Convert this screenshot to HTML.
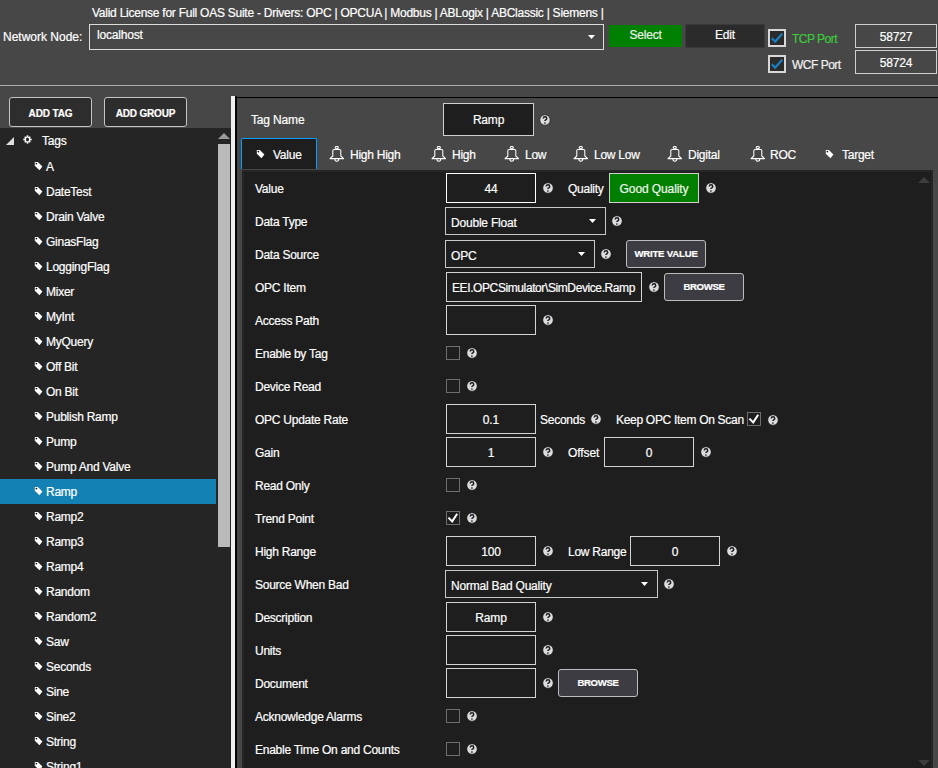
<!DOCTYPE html>
<html><head><meta charset="utf-8"><style>
html,body{margin:0;padding:0;width:938px;height:768px;overflow:hidden;background:#474747;}
.a{position:absolute;}
.t{font-family:"Liberation Sans", sans-serif;white-space:nowrap;-webkit-text-stroke:0.2px currentColor;}
svg{display:block;}
</style></head><body>
<div class="a" style="left:0px;top:0px;width:938px;height:768px;background:#474747;box-sizing:border-box;"></div>
<div class="a t" style="left:92px;top:7px;font-size:12px;line-height:12px;color:#ffffff;letter-spacing:-0.25px;">Valid License for Full OAS Suite - Drivers: OPC | OPCUA | Modbus | ABLogix | ABClassic | Siemens |</div>
<div class="a t" style="left:3px;top:31px;font-size:12px;line-height:12px;color:#ffffff;letter-spacing:0px;">Network Node:</div>
<div class="a" style="left:89px;top:24px;width:515px;height:26px;border:1px solid #dcdcdc;box-sizing:border-box;"></div>
<div class="a t" style="left:97px;top:29px;font-size:12px;line-height:12px;color:#ffffff;letter-spacing:-0.2px;">localhost</div>
<svg class="a" style="left:588px;top:35px" width="7" height="4" viewBox="0 0 7 4"><path d="M0 0 L7 0 L3.5 4 Z" fill="#fff"/></svg>
<div class="a" style="left:609px;top:25px;width:73px;height:22px;background:#008000;box-sizing:border-box;"></div>
<div class="a t" style="left:609px;width:73px;text-align:center;top:29px;font-size:12px;line-height:12px;color:#e8f0e8;letter-spacing:-0.2px;">Select</div>
<div class="a" style="left:685px;top:24px;width:80px;height:24px;background:#2b2b2b;border:1px solid #3a3a3a;box-sizing:border-box;"></div>
<div class="a t" style="left:685px;width:80px;text-align:center;top:29px;font-size:12px;line-height:12px;color:#ffffff;letter-spacing:-0.2px;">Edit</div>
<div class="a" style="left:768px;top:29px;width:18px;height:18px;background:#2b2b2b;border:2px solid #d8d8d8;box-sizing:border-box;"></div>
<svg class="a" style="left:768px;top:29px" width="18" height="18" viewBox="0 0 18 18"><path d="M3.8 9.2 L7.2 12.6 L14.2 4.8" fill="none" stroke="#1a7fc0" stroke-width="2.2"/></svg>
<div class="a t" style="left:792px;top:33px;font-size:12px;line-height:12px;color:#3ccb3c;letter-spacing:-0.5px;">TCP Port</div>
<div class="a" style="left:768px;top:55px;width:18px;height:18px;background:#2b2b2b;border:2px solid #d8d8d8;box-sizing:border-box;"></div>
<svg class="a" style="left:768px;top:55px" width="18" height="18" viewBox="0 0 18 18"><path d="M3.8 9.2 L7.2 12.6 L14.2 4.8" fill="none" stroke="#1a7fc0" stroke-width="2.2"/></svg>
<div class="a t" style="left:792px;top:59px;font-size:12px;line-height:12px;color:#f2f2f2;letter-spacing:-0.5px;">WCF Port</div>
<div class="a" style="left:855px;top:24px;width:82px;height:24px;border:1px solid #d0d0d0;box-sizing:border-box;"></div>
<div class="a t" style="left:855px;width:82px;text-align:center;top:31px;font-size:12px;line-height:12px;color:#ffffff;letter-spacing:-0.2px;">58727</div>
<div class="a" style="left:855px;top:50px;width:82px;height:24px;border:1px solid #d0d0d0;box-sizing:border-box;"></div>
<div class="a t" style="left:855px;width:82px;text-align:center;top:57px;font-size:12px;line-height:12px;color:#ffffff;letter-spacing:-0.2px;">58724</div>
<div class="a" style="left:0px;top:85px;width:938px;height:1px;background:#ababab;box-sizing:border-box;"></div>
<div class="a" style="left:9px;top:97px;width:83px;height:30px;background:#2d2d2d;border:1px solid #c4c4c4;border-radius:3px;box-sizing:border-box;"></div>
<div class="a t" style="left:9px;width:83px;text-align:center;top:109px;font-size:10px;line-height:10px;color:#ffffff;font-weight:700;letter-spacing:-0.15px;">ADD TAG</div>
<div class="a" style="left:104px;top:97px;width:83px;height:30px;background:#2d2d2d;border:1px solid #c4c4c4;border-radius:3px;box-sizing:border-box;"></div>
<div class="a t" style="left:104px;width:83px;text-align:center;top:109px;font-size:10px;line-height:10px;color:#ffffff;font-weight:700;letter-spacing:-0.2px;">ADD GROUP</div>
<div class="a" style="left:0px;top:128px;width:231px;height:640px;background:#252525;box-sizing:border-box;"></div>
<svg class="a" style="left:6px;top:137px" width="9" height="8" viewBox="0 0 9 8"><path d="M0 8 L8 0 L8 8 Z" fill="#e0e0e0"/></svg>
<svg class="a" style="left:23px;top:135px" width="9" height="9" viewBox="0 0 9 9"><g fill="#fff"><circle cx="4.5" cy="4.5" r="2.9"/><rect x="3.7" y="0.3" width="1.6" height="8.4"/><rect x="0.3" y="3.7" width="8.4" height="1.6"/><rect x="3.7" y="0.6" width="1.6" height="7.8" transform="rotate(45 4.5 4.5)"/><rect x="0.6" y="3.7" width="7.8" height="1.6" transform="rotate(45 4.5 4.5)"/></g><ellipse cx="4.5" cy="4.5" rx="1.5" ry="1.9" fill="#252525"/></svg>
<div class="a t" style="left:42px;top:135px;font-size:12px;line-height:12px;color:#ffffff;letter-spacing:-0.2px;">Tags</div>
<svg class="a" style="left:34px;top:162px" width="10" height="10" viewBox="0 0 10 10"><path d="M0.8 0 L3.9 0 L8.4 4.6 L5.5 8.3 L0.8 3.7 Z" fill="#fff"/><circle cx="2.4" cy="1.6" r="0.85" fill="#111"/></svg>
<div class="a t" style="left:46px;top:161px;font-size:12px;line-height:12px;color:#ffffff;letter-spacing:-0.25px;">A</div>
<svg class="a" style="left:34px;top:187px" width="10" height="10" viewBox="0 0 10 10"><path d="M0.8 0 L3.9 0 L8.4 4.6 L5.5 8.3 L0.8 3.7 Z" fill="#fff"/><circle cx="2.4" cy="1.6" r="0.85" fill="#111"/></svg>
<div class="a t" style="left:46px;top:186px;font-size:12px;line-height:12px;color:#ffffff;letter-spacing:-0.25px;">DateTest</div>
<svg class="a" style="left:34px;top:212px" width="10" height="10" viewBox="0 0 10 10"><path d="M0.8 0 L3.9 0 L8.4 4.6 L5.5 8.3 L0.8 3.7 Z" fill="#fff"/><circle cx="2.4" cy="1.6" r="0.85" fill="#111"/></svg>
<div class="a t" style="left:46px;top:211px;font-size:12px;line-height:12px;color:#ffffff;letter-spacing:-0.25px;">Drain Valve</div>
<svg class="a" style="left:34px;top:237px" width="10" height="10" viewBox="0 0 10 10"><path d="M0.8 0 L3.9 0 L8.4 4.6 L5.5 8.3 L0.8 3.7 Z" fill="#fff"/><circle cx="2.4" cy="1.6" r="0.85" fill="#111"/></svg>
<div class="a t" style="left:46px;top:236px;font-size:12px;line-height:12px;color:#ffffff;letter-spacing:-0.25px;">GinasFlag</div>
<svg class="a" style="left:34px;top:262px" width="10" height="10" viewBox="0 0 10 10"><path d="M0.8 0 L3.9 0 L8.4 4.6 L5.5 8.3 L0.8 3.7 Z" fill="#fff"/><circle cx="2.4" cy="1.6" r="0.85" fill="#111"/></svg>
<div class="a t" style="left:46px;top:261px;font-size:12px;line-height:12px;color:#ffffff;letter-spacing:-0.25px;">LoggingFlag</div>
<svg class="a" style="left:34px;top:287px" width="10" height="10" viewBox="0 0 10 10"><path d="M0.8 0 L3.9 0 L8.4 4.6 L5.5 8.3 L0.8 3.7 Z" fill="#fff"/><circle cx="2.4" cy="1.6" r="0.85" fill="#111"/></svg>
<div class="a t" style="left:46px;top:286px;font-size:12px;line-height:12px;color:#ffffff;letter-spacing:-0.25px;">Mixer</div>
<svg class="a" style="left:34px;top:312px" width="10" height="10" viewBox="0 0 10 10"><path d="M0.8 0 L3.9 0 L8.4 4.6 L5.5 8.3 L0.8 3.7 Z" fill="#fff"/><circle cx="2.4" cy="1.6" r="0.85" fill="#111"/></svg>
<div class="a t" style="left:46px;top:311px;font-size:12px;line-height:12px;color:#ffffff;letter-spacing:-0.25px;">MyInt</div>
<svg class="a" style="left:34px;top:337px" width="10" height="10" viewBox="0 0 10 10"><path d="M0.8 0 L3.9 0 L8.4 4.6 L5.5 8.3 L0.8 3.7 Z" fill="#fff"/><circle cx="2.4" cy="1.6" r="0.85" fill="#111"/></svg>
<div class="a t" style="left:46px;top:336px;font-size:12px;line-height:12px;color:#ffffff;letter-spacing:-0.25px;">MyQuery</div>
<svg class="a" style="left:34px;top:362px" width="10" height="10" viewBox="0 0 10 10"><path d="M0.8 0 L3.9 0 L8.4 4.6 L5.5 8.3 L0.8 3.7 Z" fill="#fff"/><circle cx="2.4" cy="1.6" r="0.85" fill="#111"/></svg>
<div class="a t" style="left:46px;top:361px;font-size:12px;line-height:12px;color:#ffffff;letter-spacing:-0.25px;">Off Bit</div>
<svg class="a" style="left:34px;top:387px" width="10" height="10" viewBox="0 0 10 10"><path d="M0.8 0 L3.9 0 L8.4 4.6 L5.5 8.3 L0.8 3.7 Z" fill="#fff"/><circle cx="2.4" cy="1.6" r="0.85" fill="#111"/></svg>
<div class="a t" style="left:46px;top:386px;font-size:12px;line-height:12px;color:#ffffff;letter-spacing:-0.25px;">On Bit</div>
<svg class="a" style="left:34px;top:412px" width="10" height="10" viewBox="0 0 10 10"><path d="M0.8 0 L3.9 0 L8.4 4.6 L5.5 8.3 L0.8 3.7 Z" fill="#fff"/><circle cx="2.4" cy="1.6" r="0.85" fill="#111"/></svg>
<div class="a t" style="left:46px;top:411px;font-size:12px;line-height:12px;color:#ffffff;letter-spacing:-0.25px;">Publish Ramp</div>
<svg class="a" style="left:34px;top:437px" width="10" height="10" viewBox="0 0 10 10"><path d="M0.8 0 L3.9 0 L8.4 4.6 L5.5 8.3 L0.8 3.7 Z" fill="#fff"/><circle cx="2.4" cy="1.6" r="0.85" fill="#111"/></svg>
<div class="a t" style="left:46px;top:436px;font-size:12px;line-height:12px;color:#ffffff;letter-spacing:-0.25px;">Pump</div>
<svg class="a" style="left:34px;top:462px" width="10" height="10" viewBox="0 0 10 10"><path d="M0.8 0 L3.9 0 L8.4 4.6 L5.5 8.3 L0.8 3.7 Z" fill="#fff"/><circle cx="2.4" cy="1.6" r="0.85" fill="#111"/></svg>
<div class="a t" style="left:46px;top:461px;font-size:12px;line-height:12px;color:#ffffff;letter-spacing:-0.25px;">Pump And Valve</div>
<div class="a" style="left:0px;top:479px;width:216px;height:25px;background:#1481b4;box-sizing:border-box;"></div>
<svg class="a" style="left:34px;top:487px" width="10" height="10" viewBox="0 0 10 10"><path d="M0.8 0 L3.9 0 L8.4 4.6 L5.5 8.3 L0.8 3.7 Z" fill="#fff"/><circle cx="2.4" cy="1.6" r="0.85" fill="#111"/></svg>
<div class="a t" style="left:46px;top:486px;font-size:12px;line-height:12px;color:#ffffff;letter-spacing:-0.25px;">Ramp</div>
<svg class="a" style="left:34px;top:512px" width="10" height="10" viewBox="0 0 10 10"><path d="M0.8 0 L3.9 0 L8.4 4.6 L5.5 8.3 L0.8 3.7 Z" fill="#fff"/><circle cx="2.4" cy="1.6" r="0.85" fill="#111"/></svg>
<div class="a t" style="left:46px;top:511px;font-size:12px;line-height:12px;color:#ffffff;letter-spacing:-0.25px;">Ramp2</div>
<svg class="a" style="left:34px;top:537px" width="10" height="10" viewBox="0 0 10 10"><path d="M0.8 0 L3.9 0 L8.4 4.6 L5.5 8.3 L0.8 3.7 Z" fill="#fff"/><circle cx="2.4" cy="1.6" r="0.85" fill="#111"/></svg>
<div class="a t" style="left:46px;top:536px;font-size:12px;line-height:12px;color:#ffffff;letter-spacing:-0.25px;">Ramp3</div>
<svg class="a" style="left:34px;top:562px" width="10" height="10" viewBox="0 0 10 10"><path d="M0.8 0 L3.9 0 L8.4 4.6 L5.5 8.3 L0.8 3.7 Z" fill="#fff"/><circle cx="2.4" cy="1.6" r="0.85" fill="#111"/></svg>
<div class="a t" style="left:46px;top:561px;font-size:12px;line-height:12px;color:#ffffff;letter-spacing:-0.25px;">Ramp4</div>
<svg class="a" style="left:34px;top:587px" width="10" height="10" viewBox="0 0 10 10"><path d="M0.8 0 L3.9 0 L8.4 4.6 L5.5 8.3 L0.8 3.7 Z" fill="#fff"/><circle cx="2.4" cy="1.6" r="0.85" fill="#111"/></svg>
<div class="a t" style="left:46px;top:586px;font-size:12px;line-height:12px;color:#ffffff;letter-spacing:-0.25px;">Random</div>
<svg class="a" style="left:34px;top:612px" width="10" height="10" viewBox="0 0 10 10"><path d="M0.8 0 L3.9 0 L8.4 4.6 L5.5 8.3 L0.8 3.7 Z" fill="#fff"/><circle cx="2.4" cy="1.6" r="0.85" fill="#111"/></svg>
<div class="a t" style="left:46px;top:611px;font-size:12px;line-height:12px;color:#ffffff;letter-spacing:-0.25px;">Random2</div>
<svg class="a" style="left:34px;top:637px" width="10" height="10" viewBox="0 0 10 10"><path d="M0.8 0 L3.9 0 L8.4 4.6 L5.5 8.3 L0.8 3.7 Z" fill="#fff"/><circle cx="2.4" cy="1.6" r="0.85" fill="#111"/></svg>
<div class="a t" style="left:46px;top:636px;font-size:12px;line-height:12px;color:#ffffff;letter-spacing:-0.25px;">Saw</div>
<svg class="a" style="left:34px;top:662px" width="10" height="10" viewBox="0 0 10 10"><path d="M0.8 0 L3.9 0 L8.4 4.6 L5.5 8.3 L0.8 3.7 Z" fill="#fff"/><circle cx="2.4" cy="1.6" r="0.85" fill="#111"/></svg>
<div class="a t" style="left:46px;top:661px;font-size:12px;line-height:12px;color:#ffffff;letter-spacing:-0.25px;">Seconds</div>
<svg class="a" style="left:34px;top:687px" width="10" height="10" viewBox="0 0 10 10"><path d="M0.8 0 L3.9 0 L8.4 4.6 L5.5 8.3 L0.8 3.7 Z" fill="#fff"/><circle cx="2.4" cy="1.6" r="0.85" fill="#111"/></svg>
<div class="a t" style="left:46px;top:686px;font-size:12px;line-height:12px;color:#ffffff;letter-spacing:-0.25px;">Sine</div>
<svg class="a" style="left:34px;top:712px" width="10" height="10" viewBox="0 0 10 10"><path d="M0.8 0 L3.9 0 L8.4 4.6 L5.5 8.3 L0.8 3.7 Z" fill="#fff"/><circle cx="2.4" cy="1.6" r="0.85" fill="#111"/></svg>
<div class="a t" style="left:46px;top:711px;font-size:12px;line-height:12px;color:#ffffff;letter-spacing:-0.25px;">Sine2</div>
<svg class="a" style="left:34px;top:737px" width="10" height="10" viewBox="0 0 10 10"><path d="M0.8 0 L3.9 0 L8.4 4.6 L5.5 8.3 L0.8 3.7 Z" fill="#fff"/><circle cx="2.4" cy="1.6" r="0.85" fill="#111"/></svg>
<div class="a t" style="left:46px;top:736px;font-size:12px;line-height:12px;color:#ffffff;letter-spacing:-0.25px;">String</div>
<svg class="a" style="left:34px;top:762px" width="10" height="10" viewBox="0 0 10 10"><path d="M0.8 0 L3.9 0 L8.4 4.6 L5.5 8.3 L0.8 3.7 Z" fill="#fff"/><circle cx="2.4" cy="1.6" r="0.85" fill="#111"/></svg>
<div class="a t" style="left:46px;top:761px;font-size:12px;line-height:12px;color:#ffffff;letter-spacing:-0.25px;">String1</div>
<svg class="a" style="left:218px;top:133px" width="12" height="6" viewBox="0 0 12 6"><path d="M0 6 L12 6 L6.0 0 Z" fill="#9a9a9a"/></svg>
<div class="a" style="left:218px;top:144px;width:12px;height:403px;background:#bababa;box-sizing:border-box;"></div>
<div class="a" style="left:231px;top:96px;width:4px;height:672px;background:#f0f0f0;box-sizing:border-box;"></div>
<div class="a" style="left:235px;top:96px;width:2px;height:672px;background:#0a0a0a;box-sizing:border-box;"></div>
<div class="a" style="left:236px;top:97px;width:702px;height:1px;background:#000;box-sizing:border-box;"></div>
<div class="a" style="left:236px;top:97px;width:1px;height:671px;background:#000;box-sizing:border-box;"></div>
<div class="a t" style="left:251px;top:114px;font-size:12px;line-height:12px;color:#ffffff;letter-spacing:-0.15px;">Tag Name</div>
<div class="a" style="left:443px;top:103px;width:91px;height:33px;background:#1e1e1e;border:1px solid #d0d0d0;box-sizing:border-box;"></div>
<div class="a t" style="left:443px;width:91px;text-align:center;top:114px;font-size:12px;line-height:12px;color:#ffffff;letter-spacing:-0.2px;">Ramp</div>
<svg class="a" style="left:539px;top:114px" width="12" height="12" viewBox="0 0 12 12"><circle cx="6" cy="6" r="5.2" fill="#dcdcdc" stroke="#111" stroke-width="0.6"/><path d="M4.2 4.5 Q4.3 2.8 6.1 2.8 Q7.7 2.8 7.7 4.4 Q7.7 5.3 6.7 5.9 Q5.9 6.3 5.9 6.9" fill="none" stroke="#1c1c24" stroke-width="1.5"/><rect x="5.15" y="8.4" width="1.5" height="1.3" fill="#1c1c24"/></svg>
<div class="a" style="left:241px;top:138px;width:76px;height:31px;background:#1e1e1e;border:1px solid #08a0ff;border-radius:2px;box-sizing:border-box;border-bottom:none;border-bottom-left-radius:0;border-bottom-right-radius:0;"></div>
<svg class="a" style="left:256px;top:150px" width="10" height="10" viewBox="0 0 10 10"><path d="M0.8 0 L3.9 0 L8.4 4.6 L5.5 8.3 L0.8 3.7 Z" fill="#fff"/><circle cx="2.4" cy="1.6" r="0.85" fill="#111"/></svg>
<div class="a t" style="left:273px;top:149px;font-size:12px;line-height:12px;color:#ffffff;letter-spacing:-0.25px;">Value</div>
<svg class="a" style="left:329px;top:146px" width="16" height="17" viewBox="0 0 16 17"><ellipse cx="7.8" cy="1.6" rx="1.6" ry="1.1" fill="none" stroke="#fff" stroke-width="1.1"/><path d="M3.8 10 L3.8 4.6 Q3.8 3.4 5 3.4 L10.6 3.4 Q11.8 3.4 11.8 4.6 L11.8 10 L14.6 12.6 L1 12.6 Z" fill="none" stroke="#fff" stroke-width="1.05" stroke-linejoin="round"/><path d="M5.8 12.8 Q5.8 15.3 7.8 15.3 Q9.8 15.3 9.8 12.8" fill="none" stroke="#fff" stroke-width="1.05"/></svg>
<div class="a t" style="left:350px;top:149px;font-size:12px;line-height:12px;color:#ffffff;letter-spacing:-0.25px;">High High</div>
<svg class="a" style="left:431px;top:146px" width="16" height="17" viewBox="0 0 16 17"><ellipse cx="7.8" cy="1.6" rx="1.6" ry="1.1" fill="none" stroke="#fff" stroke-width="1.1"/><path d="M3.8 10 L3.8 4.6 Q3.8 3.4 5 3.4 L10.6 3.4 Q11.8 3.4 11.8 4.6 L11.8 10 L14.6 12.6 L1 12.6 Z" fill="none" stroke="#fff" stroke-width="1.05" stroke-linejoin="round"/><path d="M5.8 12.8 Q5.8 15.3 7.8 15.3 Q9.8 15.3 9.8 12.8" fill="none" stroke="#fff" stroke-width="1.05"/></svg>
<div class="a t" style="left:452px;top:149px;font-size:12px;line-height:12px;color:#ffffff;letter-spacing:-0.25px;">High</div>
<svg class="a" style="left:504px;top:146px" width="16" height="17" viewBox="0 0 16 17"><ellipse cx="7.8" cy="1.6" rx="1.6" ry="1.1" fill="none" stroke="#fff" stroke-width="1.1"/><path d="M3.8 10 L3.8 4.6 Q3.8 3.4 5 3.4 L10.6 3.4 Q11.8 3.4 11.8 4.6 L11.8 10 L14.6 12.6 L1 12.6 Z" fill="none" stroke="#fff" stroke-width="1.05" stroke-linejoin="round"/><path d="M5.8 12.8 Q5.8 15.3 7.8 15.3 Q9.8 15.3 9.8 12.8" fill="none" stroke="#fff" stroke-width="1.05"/></svg>
<div class="a t" style="left:525px;top:149px;font-size:12px;line-height:12px;color:#ffffff;letter-spacing:-0.25px;">Low</div>
<svg class="a" style="left:573px;top:146px" width="16" height="17" viewBox="0 0 16 17"><ellipse cx="7.8" cy="1.6" rx="1.6" ry="1.1" fill="none" stroke="#fff" stroke-width="1.1"/><path d="M3.8 10 L3.8 4.6 Q3.8 3.4 5 3.4 L10.6 3.4 Q11.8 3.4 11.8 4.6 L11.8 10 L14.6 12.6 L1 12.6 Z" fill="none" stroke="#fff" stroke-width="1.05" stroke-linejoin="round"/><path d="M5.8 12.8 Q5.8 15.3 7.8 15.3 Q9.8 15.3 9.8 12.8" fill="none" stroke="#fff" stroke-width="1.05"/></svg>
<div class="a t" style="left:594px;top:149px;font-size:12px;line-height:12px;color:#ffffff;letter-spacing:-0.25px;">Low Low</div>
<svg class="a" style="left:667px;top:146px" width="16" height="17" viewBox="0 0 16 17"><ellipse cx="7.8" cy="1.6" rx="1.6" ry="1.1" fill="none" stroke="#fff" stroke-width="1.1"/><path d="M3.8 10 L3.8 4.6 Q3.8 3.4 5 3.4 L10.6 3.4 Q11.8 3.4 11.8 4.6 L11.8 10 L14.6 12.6 L1 12.6 Z" fill="none" stroke="#fff" stroke-width="1.05" stroke-linejoin="round"/><path d="M5.8 12.8 Q5.8 15.3 7.8 15.3 Q9.8 15.3 9.8 12.8" fill="none" stroke="#fff" stroke-width="1.05"/></svg>
<div class="a t" style="left:688px;top:149px;font-size:12px;line-height:12px;color:#ffffff;letter-spacing:-0.25px;">Digital</div>
<svg class="a" style="left:750px;top:146px" width="16" height="17" viewBox="0 0 16 17"><ellipse cx="7.8" cy="1.6" rx="1.6" ry="1.1" fill="none" stroke="#fff" stroke-width="1.1"/><path d="M3.8 10 L3.8 4.6 Q3.8 3.4 5 3.4 L10.6 3.4 Q11.8 3.4 11.8 4.6 L11.8 10 L14.6 12.6 L1 12.6 Z" fill="none" stroke="#fff" stroke-width="1.05" stroke-linejoin="round"/><path d="M5.8 12.8 Q5.8 15.3 7.8 15.3 Q9.8 15.3 9.8 12.8" fill="none" stroke="#fff" stroke-width="1.05"/></svg>
<div class="a t" style="left:770px;top:149px;font-size:12px;line-height:12px;color:#ffffff;letter-spacing:-0.25px;">ROC</div>
<svg class="a" style="left:825px;top:150px" width="10" height="10" viewBox="0 0 10 10"><path d="M0.8 0 L3.9 0 L8.4 4.6 L5.5 8.3 L0.8 3.7 Z" fill="#fff"/><circle cx="2.4" cy="1.6" r="0.85" fill="#111"/></svg>
<div class="a t" style="left:842px;top:149px;font-size:12px;line-height:12px;color:#ffffff;letter-spacing:-0.25px;">Target</div>
<div class="a" style="left:242px;top:170px;width:691px;height:598px;background:#1e1e1e;border:2px solid #262626;box-sizing:border-box;border-bottom:none;"></div>
<svg class="a" style="left:918px;top:177px" width="12" height="6" viewBox="0 0 12 6"><path d="M0 6 L12 6 L6.0 0 Z" fill="#3c3c3c"/></svg>
<svg class="a" style="left:918px;top:760px" width="12" height="6" viewBox="0 0 12 6"><path d="M0 0 L12 0 L6.0 6 Z" fill="#3c3c3c"/></svg>
<div class="a t" style="left:255px;top:183px;font-size:12px;line-height:12px;color:#ffffff;letter-spacing:-0.25px;">Value</div>
<div class="a t" style="left:255px;top:216px;font-size:12px;line-height:12px;color:#ffffff;letter-spacing:-0.25px;">Data Type</div>
<div class="a t" style="left:255px;top:249px;font-size:12px;line-height:12px;color:#ffffff;letter-spacing:-0.25px;">Data Source</div>
<div class="a t" style="left:255px;top:282px;font-size:12px;line-height:12px;color:#ffffff;letter-spacing:-0.25px;">OPC Item</div>
<div class="a t" style="left:255px;top:315px;font-size:12px;line-height:12px;color:#ffffff;letter-spacing:-0.25px;">Access Path</div>
<div class="a t" style="left:255px;top:348px;font-size:12px;line-height:12px;color:#ffffff;letter-spacing:-0.25px;">Enable by Tag</div>
<div class="a t" style="left:255px;top:381px;font-size:12px;line-height:12px;color:#ffffff;letter-spacing:-0.25px;">Device Read</div>
<div class="a t" style="left:255px;top:414px;font-size:12px;line-height:12px;color:#ffffff;letter-spacing:-0.25px;">OPC Update Rate</div>
<div class="a t" style="left:255px;top:447px;font-size:12px;line-height:12px;color:#ffffff;letter-spacing:-0.25px;">Gain</div>
<div class="a t" style="left:255px;top:480px;font-size:12px;line-height:12px;color:#ffffff;letter-spacing:-0.25px;">Read Only</div>
<div class="a t" style="left:255px;top:513px;font-size:12px;line-height:12px;color:#ffffff;letter-spacing:-0.25px;">Trend Point</div>
<div class="a t" style="left:255px;top:546px;font-size:12px;line-height:12px;color:#ffffff;letter-spacing:-0.25px;">High Range</div>
<div class="a t" style="left:255px;top:579px;font-size:12px;line-height:12px;color:#ffffff;letter-spacing:-0.25px;">Source When Bad</div>
<div class="a t" style="left:255px;top:612px;font-size:12px;line-height:12px;color:#ffffff;letter-spacing:-0.25px;">Description</div>
<div class="a t" style="left:255px;top:645px;font-size:12px;line-height:12px;color:#ffffff;letter-spacing:-0.25px;">Units</div>
<div class="a t" style="left:255px;top:678px;font-size:12px;line-height:12px;color:#ffffff;letter-spacing:-0.25px;">Document</div>
<div class="a t" style="left:255px;top:711px;font-size:12px;line-height:12px;color:#ffffff;letter-spacing:-0.25px;">Acknowledge Alarms</div>
<div class="a t" style="left:255px;top:744px;font-size:12px;line-height:12px;color:#ffffff;letter-spacing:-0.25px;">Enable Time On and Counts</div>
<div class="a" style="left:446px;top:173px;width:90px;height:30px;background:#1e1e1e;border:1px solid #ffffff;box-sizing:border-box;"></div>
<div class="a t" style="left:446px;width:90px;text-align:center;top:183px;font-size:12px;line-height:12px;color:#ffffff;letter-spacing:-0.1px;">44</div>
<svg class="a" style="left:542px;top:182px" width="12" height="12" viewBox="0 0 12 12"><circle cx="6" cy="6" r="5.2" fill="#dcdcdc" stroke="#111" stroke-width="0.6"/><path d="M4.2 4.5 Q4.3 2.8 6.1 2.8 Q7.7 2.8 7.7 4.4 Q7.7 5.3 6.7 5.9 Q5.9 6.3 5.9 6.9" fill="none" stroke="#1c1c24" stroke-width="1.5"/><rect x="5.15" y="8.4" width="1.5" height="1.3" fill="#1c1c24"/></svg>
<div class="a t" style="left:568px;top:183px;font-size:12px;line-height:12px;color:#ffffff;letter-spacing:-0.25px;">Quality</div>
<div class="a" style="left:609px;top:173px;width:90px;height:30px;background:#007f00;border:1px solid #d0d0d0;box-sizing:border-box;"></div>
<div class="a t" style="left:609px;width:90px;text-align:center;top:183px;font-size:12px;line-height:12px;color:#f0f5f0;letter-spacing:-0.1px;">Good Quality</div>
<svg class="a" style="left:705px;top:182px" width="12" height="12" viewBox="0 0 12 12"><circle cx="6" cy="6" r="5.2" fill="#dcdcdc" stroke="#111" stroke-width="0.6"/><path d="M4.2 4.5 Q4.3 2.8 6.1 2.8 Q7.7 2.8 7.7 4.4 Q7.7 5.3 6.7 5.9 Q5.9 6.3 5.9 6.9" fill="none" stroke="#1c1c24" stroke-width="1.5"/><rect x="5.15" y="8.4" width="1.5" height="1.3" fill="#1c1c24"/></svg>
<div class="a" style="left:445px;top:207px;width:161px;height:28px;background:#1e1e1e;border:1px solid #c8c8c8;box-sizing:border-box;"></div>
<div class="a t" style="left:451px;top:217px;font-size:12px;line-height:12px;color:#ffffff;letter-spacing:-0.2px;">Double Float</div>
<svg class="a" style="left:589px;top:219px" width="7" height="4" viewBox="0 0 7 4"><path d="M0 0 L7 0 L3.5 4 Z" fill="#fff"/></svg>
<svg class="a" style="left:611px;top:215px" width="12" height="12" viewBox="0 0 12 12"><circle cx="6" cy="6" r="5.2" fill="#dcdcdc" stroke="#111" stroke-width="0.6"/><path d="M4.2 4.5 Q4.3 2.8 6.1 2.8 Q7.7 2.8 7.7 4.4 Q7.7 5.3 6.7 5.9 Q5.9 6.3 5.9 6.9" fill="none" stroke="#1c1c24" stroke-width="1.5"/><rect x="5.15" y="8.4" width="1.5" height="1.3" fill="#1c1c24"/></svg>
<div class="a" style="left:445px;top:240px;width:150px;height:28px;background:#1e1e1e;border:1px solid #c8c8c8;box-sizing:border-box;"></div>
<div class="a t" style="left:451px;top:250px;font-size:12px;line-height:12px;color:#ffffff;letter-spacing:-0.2px;">OPC</div>
<svg class="a" style="left:578px;top:252px" width="7" height="4" viewBox="0 0 7 4"><path d="M0 0 L7 0 L3.5 4 Z" fill="#fff"/></svg>
<svg class="a" style="left:600px;top:248px" width="12" height="12" viewBox="0 0 12 12"><circle cx="6" cy="6" r="5.2" fill="#dcdcdc" stroke="#111" stroke-width="0.6"/><path d="M4.2 4.5 Q4.3 2.8 6.1 2.8 Q7.7 2.8 7.7 4.4 Q7.7 5.3 6.7 5.9 Q5.9 6.3 5.9 6.9" fill="none" stroke="#1c1c24" stroke-width="1.5"/><rect x="5.15" y="8.4" width="1.5" height="1.3" fill="#1c1c24"/></svg>
<div class="a" style="left:626px;top:240px;width:80px;height:28px;background:#3d3c42;border:1px solid #bdbdbd;border-radius:3px;box-sizing:border-box;"></div>
<div class="a t" style="left:626px;width:80px;text-align:center;top:249px;font-size:9.6px;line-height:9.6px;color:#ffffff;font-weight:700;letter-spacing:-0.2px;">WRITE VALUE</div>
<div class="a" style="left:446px;top:272px;width:196px;height:30px;background:#1e1e1e;border:1px solid #d4d4d4;box-sizing:border-box;"></div>
<div class="a t" style="left:452px;top:282px;font-size:12px;line-height:12px;color:#ffffff;letter-spacing:-0.4px;">EEI.OPCSimulator\SimDevice.Ramp</div>
<svg class="a" style="left:648px;top:281px" width="12" height="12" viewBox="0 0 12 12"><circle cx="6" cy="6" r="5.2" fill="#dcdcdc" stroke="#111" stroke-width="0.6"/><path d="M4.2 4.5 Q4.3 2.8 6.1 2.8 Q7.7 2.8 7.7 4.4 Q7.7 5.3 6.7 5.9 Q5.9 6.3 5.9 6.9" fill="none" stroke="#1c1c24" stroke-width="1.5"/><rect x="5.15" y="8.4" width="1.5" height="1.3" fill="#1c1c24"/></svg>
<div class="a" style="left:664px;top:273px;width:80px;height:28px;background:#3d3c42;border:1px solid #bdbdbd;border-radius:3px;box-sizing:border-box;"></div>
<div class="a t" style="left:664px;width:80px;text-align:center;top:282px;font-size:9.6px;line-height:9.6px;color:#ffffff;font-weight:700;letter-spacing:-0.35px;">BROWSE</div>
<div class="a" style="left:446px;top:305px;width:90px;height:30px;background:#1e1e1e;border:1px solid #d4d4d4;box-sizing:border-box;"></div>
<svg class="a" style="left:542px;top:314px" width="12" height="12" viewBox="0 0 12 12"><circle cx="6" cy="6" r="5.2" fill="#dcdcdc" stroke="#111" stroke-width="0.6"/><path d="M4.2 4.5 Q4.3 2.8 6.1 2.8 Q7.7 2.8 7.7 4.4 Q7.7 5.3 6.7 5.9 Q5.9 6.3 5.9 6.9" fill="none" stroke="#1c1c24" stroke-width="1.5"/><rect x="5.15" y="8.4" width="1.5" height="1.3" fill="#1c1c24"/></svg>
<div class="a" style="left:446px;top:346px;width:14px;height:14px;border:1px solid #6e6e6e;box-sizing:border-box;"></div>
<svg class="a" style="left:466px;top:347px" width="12" height="12" viewBox="0 0 12 12"><circle cx="6" cy="6" r="5.2" fill="#dcdcdc" stroke="#111" stroke-width="0.6"/><path d="M4.2 4.5 Q4.3 2.8 6.1 2.8 Q7.7 2.8 7.7 4.4 Q7.7 5.3 6.7 5.9 Q5.9 6.3 5.9 6.9" fill="none" stroke="#1c1c24" stroke-width="1.5"/><rect x="5.15" y="8.4" width="1.5" height="1.3" fill="#1c1c24"/></svg>
<div class="a" style="left:446px;top:379px;width:14px;height:14px;border:1px solid #6e6e6e;box-sizing:border-box;"></div>
<svg class="a" style="left:466px;top:380px" width="12" height="12" viewBox="0 0 12 12"><circle cx="6" cy="6" r="5.2" fill="#dcdcdc" stroke="#111" stroke-width="0.6"/><path d="M4.2 4.5 Q4.3 2.8 6.1 2.8 Q7.7 2.8 7.7 4.4 Q7.7 5.3 6.7 5.9 Q5.9 6.3 5.9 6.9" fill="none" stroke="#1c1c24" stroke-width="1.5"/><rect x="5.15" y="8.4" width="1.5" height="1.3" fill="#1c1c24"/></svg>
<div class="a" style="left:446px;top:404px;width:90px;height:30px;background:#1e1e1e;border:1px solid #d4d4d4;box-sizing:border-box;"></div>
<div class="a t" style="left:446px;width:90px;text-align:center;top:414px;font-size:12px;line-height:12px;color:#ffffff;letter-spacing:-0.1px;">0.1</div>
<div class="a t" style="left:540px;top:414px;font-size:12px;line-height:12px;color:#ffffff;letter-spacing:-0.25px;">Seconds</div>
<svg class="a" style="left:590px;top:413px" width="12" height="12" viewBox="0 0 12 12"><circle cx="6" cy="6" r="5.2" fill="#dcdcdc" stroke="#111" stroke-width="0.6"/><path d="M4.2 4.5 Q4.3 2.8 6.1 2.8 Q7.7 2.8 7.7 4.4 Q7.7 5.3 6.7 5.9 Q5.9 6.3 5.9 6.9" fill="none" stroke="#1c1c24" stroke-width="1.5"/><rect x="5.15" y="8.4" width="1.5" height="1.3" fill="#1c1c24"/></svg>
<div class="a t" style="left:616px;top:414px;font-size:12px;line-height:12px;color:#ffffff;letter-spacing:-0.3px;">Keep OPC Item On Scan</div>
<div class="a" style="left:747px;top:412px;width:14px;height:14px;border:1px solid #6e6e6e;box-sizing:border-box;"></div>
<svg class="a" style="left:747px;top:412px" width="14" height="14" viewBox="0 0 14 14"><path d="M2.4 6.6 L6.2 10.4 L11.2 2.7" fill="none" stroke="#fff" stroke-width="2"/></svg>
<svg class="a" style="left:767px;top:414px" width="12" height="12" viewBox="0 0 12 12"><circle cx="6" cy="6" r="5.2" fill="#dcdcdc" stroke="#111" stroke-width="0.6"/><path d="M4.2 4.5 Q4.3 2.8 6.1 2.8 Q7.7 2.8 7.7 4.4 Q7.7 5.3 6.7 5.9 Q5.9 6.3 5.9 6.9" fill="none" stroke="#1c1c24" stroke-width="1.5"/><rect x="5.15" y="8.4" width="1.5" height="1.3" fill="#1c1c24"/></svg>
<div class="a" style="left:446px;top:437px;width:90px;height:30px;background:#1e1e1e;border:1px solid #d4d4d4;box-sizing:border-box;"></div>
<div class="a t" style="left:446px;width:90px;text-align:center;top:447px;font-size:12px;line-height:12px;color:#ffffff;letter-spacing:-0.1px;">1</div>
<svg class="a" style="left:542px;top:446px" width="12" height="12" viewBox="0 0 12 12"><circle cx="6" cy="6" r="5.2" fill="#dcdcdc" stroke="#111" stroke-width="0.6"/><path d="M4.2 4.5 Q4.3 2.8 6.1 2.8 Q7.7 2.8 7.7 4.4 Q7.7 5.3 6.7 5.9 Q5.9 6.3 5.9 6.9" fill="none" stroke="#1c1c24" stroke-width="1.5"/><rect x="5.15" y="8.4" width="1.5" height="1.3" fill="#1c1c24"/></svg>
<div class="a t" style="left:568px;top:447px;font-size:12px;line-height:12px;color:#ffffff;letter-spacing:-0.1px;">Offset</div>
<div class="a" style="left:604px;top:437px;width:90px;height:30px;background:#1e1e1e;border:1px solid #d4d4d4;box-sizing:border-box;"></div>
<div class="a t" style="left:604px;width:90px;text-align:center;top:447px;font-size:12px;line-height:12px;color:#ffffff;letter-spacing:-0.1px;">0</div>
<svg class="a" style="left:700px;top:446px" width="12" height="12" viewBox="0 0 12 12"><circle cx="6" cy="6" r="5.2" fill="#dcdcdc" stroke="#111" stroke-width="0.6"/><path d="M4.2 4.5 Q4.3 2.8 6.1 2.8 Q7.7 2.8 7.7 4.4 Q7.7 5.3 6.7 5.9 Q5.9 6.3 5.9 6.9" fill="none" stroke="#1c1c24" stroke-width="1.5"/><rect x="5.15" y="8.4" width="1.5" height="1.3" fill="#1c1c24"/></svg>
<div class="a" style="left:446px;top:478px;width:14px;height:14px;border:1px solid #6e6e6e;box-sizing:border-box;"></div>
<svg class="a" style="left:466px;top:479px" width="12" height="12" viewBox="0 0 12 12"><circle cx="6" cy="6" r="5.2" fill="#dcdcdc" stroke="#111" stroke-width="0.6"/><path d="M4.2 4.5 Q4.3 2.8 6.1 2.8 Q7.7 2.8 7.7 4.4 Q7.7 5.3 6.7 5.9 Q5.9 6.3 5.9 6.9" fill="none" stroke="#1c1c24" stroke-width="1.5"/><rect x="5.15" y="8.4" width="1.5" height="1.3" fill="#1c1c24"/></svg>
<div class="a" style="left:446px;top:511px;width:14px;height:14px;border:1px solid #6e6e6e;box-sizing:border-box;"></div>
<svg class="a" style="left:446px;top:511px" width="14" height="14" viewBox="0 0 14 14"><path d="M2.4 6.6 L6.2 10.4 L11.2 2.7" fill="none" stroke="#fff" stroke-width="2"/></svg>
<svg class="a" style="left:466px;top:512px" width="12" height="12" viewBox="0 0 12 12"><circle cx="6" cy="6" r="5.2" fill="#dcdcdc" stroke="#111" stroke-width="0.6"/><path d="M4.2 4.5 Q4.3 2.8 6.1 2.8 Q7.7 2.8 7.7 4.4 Q7.7 5.3 6.7 5.9 Q5.9 6.3 5.9 6.9" fill="none" stroke="#1c1c24" stroke-width="1.5"/><rect x="5.15" y="8.4" width="1.5" height="1.3" fill="#1c1c24"/></svg>
<div class="a" style="left:446px;top:536px;width:90px;height:30px;background:#1e1e1e;border:1px solid #d4d4d4;box-sizing:border-box;"></div>
<div class="a t" style="left:446px;width:90px;text-align:center;top:546px;font-size:12px;line-height:12px;color:#ffffff;letter-spacing:-0.1px;">100</div>
<svg class="a" style="left:542px;top:545px" width="12" height="12" viewBox="0 0 12 12"><circle cx="6" cy="6" r="5.2" fill="#dcdcdc" stroke="#111" stroke-width="0.6"/><path d="M4.2 4.5 Q4.3 2.8 6.1 2.8 Q7.7 2.8 7.7 4.4 Q7.7 5.3 6.7 5.9 Q5.9 6.3 5.9 6.9" fill="none" stroke="#1c1c24" stroke-width="1.5"/><rect x="5.15" y="8.4" width="1.5" height="1.3" fill="#1c1c24"/></svg>
<div class="a t" style="left:568px;top:546px;font-size:12px;line-height:12px;color:#ffffff;letter-spacing:-0.25px;">Low Range</div>
<div class="a" style="left:630px;top:536px;width:90px;height:30px;background:#1e1e1e;border:1px solid #d4d4d4;box-sizing:border-box;"></div>
<div class="a t" style="left:630px;width:90px;text-align:center;top:546px;font-size:12px;line-height:12px;color:#ffffff;letter-spacing:-0.1px;">0</div>
<svg class="a" style="left:726px;top:545px" width="12" height="12" viewBox="0 0 12 12"><circle cx="6" cy="6" r="5.2" fill="#dcdcdc" stroke="#111" stroke-width="0.6"/><path d="M4.2 4.5 Q4.3 2.8 6.1 2.8 Q7.7 2.8 7.7 4.4 Q7.7 5.3 6.7 5.9 Q5.9 6.3 5.9 6.9" fill="none" stroke="#1c1c24" stroke-width="1.5"/><rect x="5.15" y="8.4" width="1.5" height="1.3" fill="#1c1c24"/></svg>
<div class="a" style="left:445px;top:570px;width:213px;height:28px;background:#1e1e1e;border:1px solid #c8c8c8;box-sizing:border-box;"></div>
<div class="a t" style="left:451px;top:580px;font-size:12px;line-height:12px;color:#ffffff;letter-spacing:-0.2px;">Normal Bad Quality</div>
<svg class="a" style="left:641px;top:582px" width="7" height="4" viewBox="0 0 7 4"><path d="M0 0 L7 0 L3.5 4 Z" fill="#fff"/></svg>
<svg class="a" style="left:663px;top:578px" width="12" height="12" viewBox="0 0 12 12"><circle cx="6" cy="6" r="5.2" fill="#dcdcdc" stroke="#111" stroke-width="0.6"/><path d="M4.2 4.5 Q4.3 2.8 6.1 2.8 Q7.7 2.8 7.7 4.4 Q7.7 5.3 6.7 5.9 Q5.9 6.3 5.9 6.9" fill="none" stroke="#1c1c24" stroke-width="1.5"/><rect x="5.15" y="8.4" width="1.5" height="1.3" fill="#1c1c24"/></svg>
<div class="a" style="left:446px;top:602px;width:90px;height:30px;background:#1e1e1e;border:1px solid #d4d4d4;box-sizing:border-box;"></div>
<div class="a t" style="left:446px;width:90px;text-align:center;top:612px;font-size:12px;line-height:12px;color:#ffffff;letter-spacing:-0.1px;">Ramp</div>
<svg class="a" style="left:542px;top:611px" width="12" height="12" viewBox="0 0 12 12"><circle cx="6" cy="6" r="5.2" fill="#dcdcdc" stroke="#111" stroke-width="0.6"/><path d="M4.2 4.5 Q4.3 2.8 6.1 2.8 Q7.7 2.8 7.7 4.4 Q7.7 5.3 6.7 5.9 Q5.9 6.3 5.9 6.9" fill="none" stroke="#1c1c24" stroke-width="1.5"/><rect x="5.15" y="8.4" width="1.5" height="1.3" fill="#1c1c24"/></svg>
<div class="a" style="left:446px;top:635px;width:90px;height:30px;background:#1e1e1e;border:1px solid #d4d4d4;box-sizing:border-box;"></div>
<svg class="a" style="left:542px;top:644px" width="12" height="12" viewBox="0 0 12 12"><circle cx="6" cy="6" r="5.2" fill="#dcdcdc" stroke="#111" stroke-width="0.6"/><path d="M4.2 4.5 Q4.3 2.8 6.1 2.8 Q7.7 2.8 7.7 4.4 Q7.7 5.3 6.7 5.9 Q5.9 6.3 5.9 6.9" fill="none" stroke="#1c1c24" stroke-width="1.5"/><rect x="5.15" y="8.4" width="1.5" height="1.3" fill="#1c1c24"/></svg>
<div class="a" style="left:446px;top:668px;width:90px;height:30px;background:#1e1e1e;border:1px solid #d4d4d4;box-sizing:border-box;"></div>
<svg class="a" style="left:542px;top:677px" width="12" height="12" viewBox="0 0 12 12"><circle cx="6" cy="6" r="5.2" fill="#dcdcdc" stroke="#111" stroke-width="0.6"/><path d="M4.2 4.5 Q4.3 2.8 6.1 2.8 Q7.7 2.8 7.7 4.4 Q7.7 5.3 6.7 5.9 Q5.9 6.3 5.9 6.9" fill="none" stroke="#1c1c24" stroke-width="1.5"/><rect x="5.15" y="8.4" width="1.5" height="1.3" fill="#1c1c24"/></svg>
<div class="a" style="left:558px;top:669px;width:80px;height:28px;background:#3d3c42;border:1px solid #bdbdbd;border-radius:3px;box-sizing:border-box;"></div>
<div class="a t" style="left:558px;width:80px;text-align:center;top:678px;font-size:9.6px;line-height:9.6px;color:#ffffff;font-weight:700;letter-spacing:-0.35px;">BROWSE</div>
<div class="a" style="left:446px;top:709px;width:14px;height:14px;border:1px solid #6e6e6e;box-sizing:border-box;"></div>
<svg class="a" style="left:466px;top:710px" width="12" height="12" viewBox="0 0 12 12"><circle cx="6" cy="6" r="5.2" fill="#dcdcdc" stroke="#111" stroke-width="0.6"/><path d="M4.2 4.5 Q4.3 2.8 6.1 2.8 Q7.7 2.8 7.7 4.4 Q7.7 5.3 6.7 5.9 Q5.9 6.3 5.9 6.9" fill="none" stroke="#1c1c24" stroke-width="1.5"/><rect x="5.15" y="8.4" width="1.5" height="1.3" fill="#1c1c24"/></svg>
<div class="a" style="left:446px;top:742px;width:14px;height:14px;border:1px solid #6e6e6e;box-sizing:border-box;"></div>
<svg class="a" style="left:466px;top:743px" width="12" height="12" viewBox="0 0 12 12"><circle cx="6" cy="6" r="5.2" fill="#dcdcdc" stroke="#111" stroke-width="0.6"/><path d="M4.2 4.5 Q4.3 2.8 6.1 2.8 Q7.7 2.8 7.7 4.4 Q7.7 5.3 6.7 5.9 Q5.9 6.3 5.9 6.9" fill="none" stroke="#1c1c24" stroke-width="1.5"/><rect x="5.15" y="8.4" width="1.5" height="1.3" fill="#1c1c24"/></svg>
</body></html>
